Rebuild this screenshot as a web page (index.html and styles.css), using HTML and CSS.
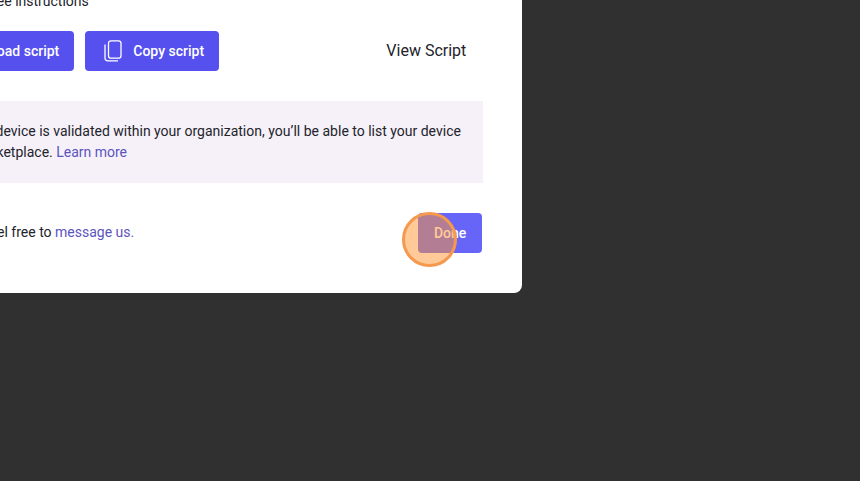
FILE: index.html
```html
<!DOCTYPE html>
<html lang="en">
<head>
  <meta charset="UTF-8">
  <title>Validate device</title>
  <link rel="stylesheet" href="styles.css">
</head>
<body>
  <div class="modal">
    <p class="intro">Next, please see instructions</p>
    <div class="actions">
      <button class="btn">
        <svg class="icon" viewBox="0 0 20 22"><path d="M10 3v11M6 10l4 4 4-4M3 19h14"/></svg>
        Download script
      </button>
      <button class="btn">
        <svg class="icon" viewBox="0 0 20 22"><rect x="5.5" y="0.8" width="12.5" height="17.4" rx="2.5"/><path d="M2 4.5v13.7a2.6 2.6 0 0 0 2.6 2.6h10.4"/></svg>
        Copy script
      </button>
      <a class="view-link">View Script</a>
    </div>
    <div class="callout">
      Once your device is validated within your organization, you’ll be able to list your device<br>
      on the Marketplace. <a class="link">Learn more</a>
    </div>
    <div class="footer">
      <p class="help">Questions? Feel free to <a class="link">message us.</a></p>
      <button class="btn btn-done">Done</button>
    </div>
  </div>
  <div class="click-marker"></div>
</body>
</html>
```

FILE: styles.css
```css
html, body {
  height: 100%;
}
body {
  margin: 0;
  background: #303030;
  color: #23232b;
  font-family: Roboto, sans-serif;
  font-size: 14px;
  overflow: hidden;
  position: relative;
}
.modal {
  width: 652.3px;
  margin: -39px 0 0 -130px;
  padding: 31px 40px 40px;
  box-sizing: border-box;
  background: #fff;
  border-radius: 0 0 8px 0;
}
.intro {
  margin: 0;
  line-height: 18px;
}
.actions {
  display: flex;
  align-items: center;
  gap: 11px;
  margin-top: 21px;
}
.btn {
  display: flex;
  align-items: center;
  gap: 10px;
  height: 40px;
  padding: 0 15px 0 18px;
  background: #5650ee;
  color: #fff;
  border: none;
  border-radius: 4px;
  font-family: inherit;
  font-size: 14px;
  font-weight: 500;
}
.icon {
  width: 20px;
  height: 22px;
  fill: none;
  stroke: #fff;
  stroke-width: 1.3;
}
.view-link {
  margin-left: auto;
  margin-bottom: 2px;
  padding-right: 16px;
  font-size: 16px;
}
.callout {
  margin: 30px -0.5px 0 0;
  padding: 20px 22px 20px 19.5px;
  line-height: 21px;
  background: #f6f1f9;
  white-space: nowrap;
}
.link {
  color: #5c54bd;
}
.footer {
  display: flex;
  justify-content: space-between;
  margin-top: 30px;
}
.help {
  margin: 10px 0 0 -1px;
  line-height: 18px;
}
.btn-done {
  padding: 0 16px;
  background: #6665f7;
}
.click-marker {
  position: absolute;
  left: 402px;
  top: 212px;
  width: 55px;
  height: 55px;
  box-sizing: border-box;
  border: 3px solid #f4994e;
  border-radius: 50%;
  background: rgba(255, 150, 50, 0.5);
}
```
